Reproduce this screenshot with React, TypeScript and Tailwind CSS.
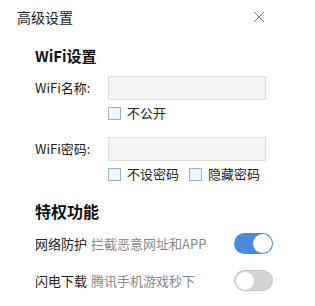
import React from "react";

function Checkbox() {
  return <span className="inline-block w-[13px] h-[13px] border border-[#9fb3c8] bg-[#eef5fc] shrink-0" />;
}

function Toggle({ on }: { on: boolean }) {
  return on ? (
    <div className="w-[39px] h-[21px] rounded-full bg-[#4a8ad8] flex items-center justify-end pr-[1px]">
      <div className="w-[19px] h-[19px] rounded-full bg-white" />
    </div>
  ) : (
    <div className="w-[39px] h-[21px] rounded-full bg-[#d4d4d4] border border-[#c4c4c4] flex items-center pl-[1px]">
      <div className="w-[18px] h-[18px] rounded-full bg-white" />
    </div>
  );
}

export default function App() {
  return (
    <div
      className="w-[315px] h-[306px] bg-white text-[#222] overflow-hidden"
      style={{ fontFamily: '"Noto Sans CJK SC", "Noto Sans", sans-serif' }}
    >
      <div className="flex items-center justify-between pl-[17px] pr-[50px] h-[34px]">
        <span className="text-[14px] leading-none text-[#222]">高级设置</span>
        <svg width="12" height="12" viewBox="0 0 12 12">
          <path d="M1 1L11 11M11 1L1 11" stroke="#777" strokeWidth="1" fill="none" />
        </svg>
      </div>
      <div className="pl-[35px]">
        <div className="mt-[11px] h-[22px] flex items-center text-[15px] font-bold text-[#111]">WiFi设置</div>

        <div className="mt-[9px] h-[24px] flex items-center">
          <span className="w-[73px] text-[13px]">WiFi名称:</span>
          <div className="w-[158px] h-[24px] bg-[#f4f4f4] border border-[#dedede]" />
        </div>
        <div className="mt-[6px] h-[14px] flex items-center pl-[73px] text-[13px]">
          <Checkbox />
          <span className="ml-[6px]">不公开</span>
        </div>

        <div className="mt-[17px] h-[24px] flex items-center">
          <span className="w-[73px] text-[13px]">WiFi密码:</span>
          <div className="w-[158px] h-[24px] bg-[#f4f4f4] border border-[#dedede]" />
        </div>
        <div className="mt-[6px] h-[14px] flex items-center pl-[73px] text-[13px]">
          <Checkbox />
          <span className="ml-[6px]">不设密码</span>
          <span className="ml-[10px] flex"><Checkbox /></span>
          <span className="ml-[6px]">隐藏密码</span>
        </div>

        <div className="mt-[19px] h-[22px] flex items-center text-[16px] font-bold text-[#111]">特权功能</div>

        <div className="mt-[11px] h-[21px] w-[238px] flex items-center justify-between text-[13px]">
          <span>
            网络防护<span className="ml-[4px] text-[#888]">拦截恶意网址和APP</span>
          </span>
          <Toggle on={true} />
        </div>
        <div className="mt-[16px] h-[21px] w-[238px] flex items-center justify-between text-[13px]">
          <span>
            闪电下载<span className="ml-[4px] text-[#888]">腾讯手机游戏秒下</span>
          </span>
          <Toggle on={false} />
        </div>
      </div>
    </div>
  );
}
